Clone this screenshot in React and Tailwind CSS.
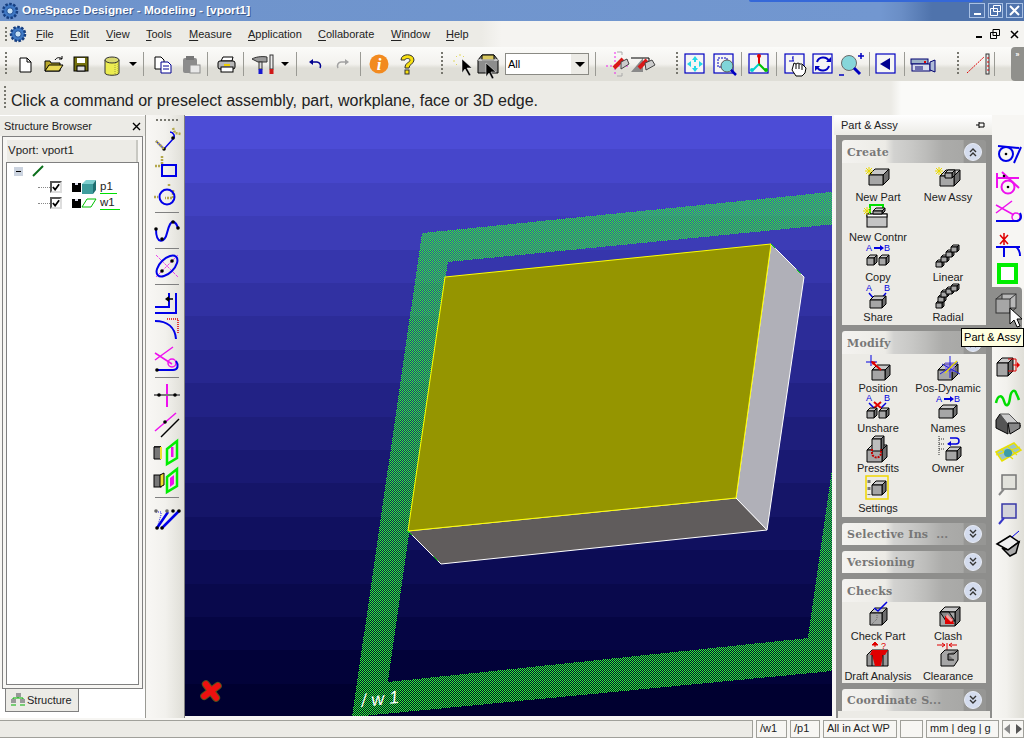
import React from "react";

const K = "#000";
const Cube = ({ x, y, w = 13, h = 11, d = 5, f = "#a6a6a6", t = "#c8c8c8", s = "#6f6f6f" }) => (
  <g stroke={K} strokeWidth="1" strokeLinejoin="round">
    <polygon points={`${x},${y + d} ${x + d},${y} ${x + w + d},${y} ${x + w},${y + d}`} fill={t} />
    <polygon points={`${x + w},${y + d} ${x + w + d},${y} ${x + w + d},${y + h} ${x + w},${y + h + d}`} fill={s} />
    <rect x={x} y={y + d} width={w} height={h} fill={f} />
  </g>
);
const Star = ({ x, y }) => (
  <g stroke="#e8d800" strokeWidth="1">
    <path d={`M${x - 4} ${y}h8M${x} ${y - 4}v8M${x - 3} ${y - 3}l6 6M${x - 3} ${y + 3}l6-6`} />
  </g>
);
const Ic = ({ children, size = 28 }) => (
  <svg width={size} height={size} viewBox="0 0 28 28" className="block shrink-0 overflow-visible">
    {children}
  </svg>
);
const AB = ({ y = 6, arrow = true }) => (
  <g fill="#0000e0">
    <text x="2" y={y} fontSize="9" fontFamily="Liberation Sans">A</text>
    <text x="20" y={y} fontSize="9" fontFamily="Liberation Sans">B</text>
    {arrow && <path d={`M10 ${y - 4}h6v-2l4 3-4 3v-2h-6z`} />}
  </g>
);

/* Part panel icons */
const I = {
  newPart: <Ic><Cube x={5} y={6} w={14} h={10} d={6} /><Star x={5} y={8} /></Ic>,
  newAssy: <Ic><Cube x={6} y={7} w={14} h={10} d={6} /><Cube x={11} y={7} w={7} h={5} d={3} /><Star x={5} y={8} /></Ic>,
  newContnr: (
    <Ic>
      <path d="M6 12V2h13v7" fill="none" stroke="#00e000" strokeWidth="2" />
      <rect x="3" y="11" width="20" height="13" fill="#c4c4c4" stroke={K} />
      <rect x="3" y="11" width="20" height="3" fill="#fff" stroke={K} />
      <Cube x={9} y={5} w={9} h={3} d={3} />
      <Star x={3} y={8} />
    </Ic>
  ),
  copy: <Ic><AB y={8} /><Cube x={3} y={12} w={7} h={7} d={3} /><Cube x={15} y={12} w={7} h={7} d={3} /></Ic>,
  linear: <Ic><Cube x={2} y={17} w={6} h={5} d={2} /><Cube x={7} y={12} w={6} h={5} d={2} /><Cube x={12} y={7} w={6} h={5} d={2} /><Cube x={17} y={2} w={6} h={5} d={2} /></Ic>,
  radial: <Ic><Cube x={2} y={18} w={6} h={5} d={2} /><Cube x={4} y={12} w={6} h={5} d={2} /><Cube x={7} y={7} w={6} h={5} d={2} /><Cube x={12} y={4} w={6} h={5} d={2} /><Cube x={17} y={1} w={6} h={5} d={2} /></Ic>,
  share: (
    <Ic>
      <AB y={8} arrow={false} />
      <path d="M5 10l6 7M22 10l-6 7" stroke="#0000e0" strokeWidth="1.5" />
      <Cube x={6} y={13} w={12} h={8} d={4} />
    </Ic>
  ),
  position: (
    <Ic>
      <path d="M7 1v11M2 8h11" stroke="#0000e0" />
      <Cube x={8} y={11} w={13} h={10} d={5} />
      <path d="M8 8l9 8" stroke="#e00000" strokeWidth="2" />
      <path d="M7 7l5 1-3 3z" fill="#e00000" />
    </Ic>
  ),
  posDyn: (
    <Ic>
      <Cube x={4} y={10} w={14} h={10} d={6} />
      <rect x="11" y="8" width="10" height="10" fill="#8a74e8" opacity=".7" />
      <path d="M16 2v22M6 20L24 8M8 10l18 10" stroke="#2020e0" />
      <path d="M11 19l12-12" stroke="#e8d800" strokeWidth="1.5" />
    </Ic>
  ),
  unshare: (
    <Ic>
      <AB y={7} arrow={false} />
      <path d="M5 9l5 5M22 9l-5 5" stroke="#0000e0" strokeWidth="1.5" />
      <path d="M10 8l7 6M17 8l-7 6" stroke="#e00000" strokeWidth="2" />
      <Cube x={3} y={14} w={7} h={7} d={3} /><Cube x={15} y={14} w={7} h={7} d={3} />
    </Ic>
  ),
  names: <Ic><AB y={8} /><Cube x={5} y={11} w={14} h={9} d={4} /></Ic>,
  pressfits: (
    <Ic>
      <Cube x={3} y={11} w={15} h={12} d={5} />
      <Cube x={8} y={2} w={9} h={12} d={3} f="#bdbdbd" />
      <path d="M8 15v4a4 4 0 0 0 9 0v-4" stroke="#c00000" strokeWidth="2" strokeDasharray="2 1" fill="none" />
    </Ic>
  ),
  owner: (
    <Ic>
      <path d="M5 2v20M5 5h5M5 10h5M5 15h5" stroke="#333" strokeDasharray="1 1" />
      <path d="M16 4h6a3 3 0 0 1 0 6h-8" stroke="#0000e0" strokeWidth="1.5" fill="none" />
      <path d="M17 7l-4 3 4 2z" fill="#0000e0" />
      <Cube x={12} y={13} w={11} h={9} d={4} />
    </Ic>
  ),
  settings: (
    <Ic>
      <rect x="2" y="2" width="22" height="23" fill="none" stroke="#f0d800" strokeWidth="1.5" />
      <path d="M5 6v15" stroke="#777" strokeDasharray="3 4" strokeWidth="3" />
      <Cube x={8} y={7} w={10} h={10} d={4} />
    </Ic>
  ),
  check: (
    <Ic>
      <Cube x={6} y={6} w={12} h={12} d={5} />
      <path d="M8 22l5-5v-6" stroke="#666" strokeDasharray="1 1" fill="none" />
      <path d="M10 6l4 3 9-9" stroke="#0000e0" strokeWidth="1.5" fill="none" />
    </Ic>
  ),
  clash: (
    <Ic>
      <Cube x={6} y={5} w={15} h={14} d={5} />
      <path d="M6 10l9 0 6 9H12z" fill="#888" stroke={K} />
      <path d="M11 14l7 2 2 6H11z" fill="#e00000" />
      <path d="M13 12l6 6-2 2-5-5z" fill="#f0a0a0" />
    </Ic>
  ),
  draft: (
    <Ic>
      <path d="M11 5v-3M11 0l-3 3h6z" fill="#e00000" stroke="#e00000" />
      <text x="17" y="7" fill="#e00000" fontSize="9" fontFamily="Liberation Sans">?</text>
      <polygon points="3,24 3,13 8,8 24,8 24,24" fill="#999" stroke={K} />
      <polygon points="8,8 24,8 21,13 6,13" fill="#e00000" />
      <polygon points="8,13 19,13 17,24 11,24" fill="#e00000" />
      <path d="M8 13v11M19 13v11" stroke={K} />
    </Ic>
  ),
  clearance: (
    <Ic>
      <path d="M3 3h8M15 3h8M8 1l3 2-3 2M18 1l-3 2 3 2M13 1v14" stroke="#e00000" fill="none" />
      <polygon points="7,24 7,12 11,8 24,8 24,18 20,24" fill="#a6a6a6" stroke={K} />
      <path d="M14 12h6l4-4M14 12v6h6" stroke={K} fill="#777" />
    </Ic>
  ),
};

/* Toolbar */
const BlueBox = ({ children }) => (
  <Ic><rect x="4" y="4" width="19" height="19" fill="#f5f5f5" stroke="#0000c0" strokeWidth="1.2" />{children}</Ic>
);
const T = {
  newDoc: <Ic><path d="M9 8h7l4 4v10H9z" fill="#fff" stroke={K} /><path d="M16 8v4h4" fill="none" stroke={K} /></Ic>,
  open: (
    <Ic>
      <path d="M6 21V11h5l1 2h9v8z" fill="#b9a82c" stroke={K} />
      <path d="M6 21l4-6h14l-4 6z" fill="#e9d955" stroke={K} />
      <path d="M16 10c2-3 5-3 7-1M23 6v3h-3" fill="none" stroke={K} />
    </Ic>
  ),
  save: <Ic><rect x="7" y="7" width="14" height="14" fill="#75710c" stroke={K} /><rect x="10" y="8" width="8" height="5" fill="#fff" /><rect x="10" y="16" width="8" height="5" fill="#ddd" stroke={K} /></Ic>,
  cyl: (
    <Ic>
      <path d="M7 10v13c0 3 14 3 14 0V10" fill="#ecec50" stroke="#333" />
      <ellipse cx="14" cy="10" rx="7" ry="3" fill="#d9d970" stroke="#333" />
      <path d="M17 13v12M20 12v11" stroke="#a0a040" strokeDasharray="1 1" />
    </Ic>
  ),
  copy: <Ic><path d="M7 7h6l3 3v9H7z" fill="#fff" stroke={K} /><path d="M13 12h7l3 3v8H13z" fill="#fff" stroke="#000090" /><path d="M15 16h6M15 19h6" stroke="#000090" /></Ic>,
  paste: <Ic><rect x="7" y="8" width="14" height="15" rx="2" fill="#8c8c8c" /><rect x="10" y="6" width="8" height="4" fill="#777" /><rect x="14" y="15" width="10" height="8" fill="#e8e8e8" stroke="#8c8c8c" /></Ic>,
  print: (
    <Ic>
      <path d="M9 11l2-4h10l-1 4z" fill="#fff" stroke={K} />
      <rect x="6" y="11" width="17" height="8" rx="2" fill="#b8b8b8" stroke={K} />
      <rect x="9" y="17" width="12" height="5" fill="#fff" stroke={K} />
      <path d="M12 15h6" stroke="#f0d000" strokeWidth="2" />
    </Ic>
  ),
  tools: (
    <Ic>
      <path d="M2 9c3-2 10-3 15-2v5H8c-2-1-4-2-6-3z" fill="#9a9a9a" stroke="#333" />
      <rect x="9" y="12" width="3" height="7" fill="#ddd" stroke="#333" />
      <rect x="20" y="5" width="3" height="14" fill="#eee" stroke="#333" />
      <rect x="8.5" y="19" width="4" height="5" fill="#1818d0" />
      <rect x="19.5" y="19" width="4" height="5" fill="#d01818" />
    </Ic>
  ),
  undo: <Ic><path d="M11 12h5a4 4 0 0 1 3 6" fill="none" stroke="#000090" strokeWidth="1.5" /><path d="M8 12l4-3v6z" fill="#000090" /></Ic>,
  redo: <Ic><path d="M17 12h-5a4 4 0 0 0-3 6" fill="none" stroke="#a2a2a2" strokeWidth="1.5" /><path d="M20 12l-4-3v6z" fill="#a2a2a2" /></Ic>,
  info: (
    <Ic>
      <circle cx="14" cy="14" r="9.5" fill="#f28a1f" />
      <text x="14" y="20" textAnchor="middle" fill="#fff" fontSize="17" fontWeight="700" fontStyle="italic" fontFamily="Liberation Serif">i</text>
    </Ic>
  ),
  help: (
    <Ic>
      <path d="M8 10c0-7 13-7 13 0 0 4-5 4-5 8h-4c0-6 5-5 5-8 0-2-5-2-5 0z" fill="#f8e010" stroke="#333" />
      <rect x="12" y="20" width="4" height="4" fill="#f8e010" stroke="#333" />
    </Ic>
  ),
  cursor: (
    <Ic>
      <path d="M7 6l1 1M4 11h2M8 14l-1 1M11 6v-2M14 7l1-1" stroke="#e0d860" />
      <path d="M13 9v14l3-4 4 7 2-1-4-7h5z" fill={K} stroke="#fff" strokeWidth=".5" />
    </Ic>
  ),
  box: (
    <Ic>
      <path d="M4 10l4-5h12l4 5v13H4z" fill="#8d8d8d" stroke={K} />
      <path d="M8 5h12v5H8z" fill="#d8c860" stroke={K} />
      <path d="M4 10h20" stroke="#fff" />
      <path d="M12 13v14l3-4 3 6 2-1-3-6h5z" fill={K} stroke="#fff" strokeWidth=".5" />
    </Ic>
  ),
  snap1: (
    <Ic>
      <path d="M12 2v24M3 16h22" stroke="#ee20ee" strokeDasharray="2 2" />
      <path d="M14 2h5v3M14 26h5v-3" stroke="#aaa" fill="none" />
      <path d="M11 18l9-9" stroke="#d81818" strokeWidth="4" />
      <path d="M18 12l6-3 2 5-8 5z" fill="#ccc" stroke="#444" />
    </Ic>
  ),
  snap2: (
    <Ic>
      <polygon points="2,22 14,8 14,22" fill="#8a8a8a" />
      <path d="M2 8h18v4" fill="none" stroke={K} />
      <path d="M10 18l8-8" stroke="#d81818" strokeWidth="4" />
      <path d="M16 13l7-3 3 5-9 5z" fill="#ccc" stroke="#444" />
    </Ic>
  ),
  fit: (
    <BlueBox>
      <g fill="#22d8e8">
        <path d="M14 6l-3 4h6zM14 22l-3-4h6zM6 14l4-3v6zM22 14l-4-3v6z" />
        <rect x="13" y="9" width="2" height="3" /><rect x="13" y="16" width="2" height="3" />
      </g>
    </BlueBox>
  ),
  zoomBox: (
    <BlueBox>
      <rect x="8" y="8" width="9" height="9" fill="none" stroke="#0000c0" strokeDasharray="2 1" />
      <circle cx="17" cy="16" r="6" fill="#7fd4d8" stroke="#555" />
      <path d="M21 20l5 5" stroke="#0000c0" strokeWidth="2.5" />
    </BlueBox>
  ),
  axes: (
    <BlueBox>
      <path d="M14 14V7" stroke="#e00000" strokeWidth="2" />
      <path d="M14 14l-6 6" stroke="#00d0d0" strokeWidth="2" />
      <path d="M14 14l6 6" stroke="#00c000" strokeWidth="2" />
      <circle cx="14" cy="6" r="2" fill="#e00000" /><circle cx="7" cy="20" r="2" fill="#00d0d0" /><circle cx="21" cy="20" r="2" fill="#00c000" />
    </BlueBox>
  ),
  hand: (
    <BlueBox>
      <path d="M11 8h1M8 11h5M12 6v5" stroke="#0000c0" />
      <path d="M13 13l2 1 2-1 2 1 2 0 4 4-1 5-3 3h-6l-4-6z" fill="#fff" stroke={K} />
      <path d="M15 14v5M18 14v5M21 15v5" stroke={K} />
    </BlueBox>
  ),
  rotate: (
    <BlueBox>
      <path d="M8 12a6.5 6.5 0 0 1 12-1M20 16a6.5 6.5 0 0 1-12 1" fill="none" stroke="#0000c0" strokeWidth="2" />
      <path d="M22 7v5h-5zM6 21v-5h5z" fill="#0000c0" />
    </BlueBox>
  ),
  zoomPlus: (
    <Ic>
      <circle cx="12" cy="13" r="7.5" fill="#86d6da" stroke="#6a6a6a" />
      <path d="M17 18l6 6" stroke="#0000c0" strokeWidth="3" />
      <path d="M21 6h6M24 3v6" stroke="#0000c0" strokeWidth="1.5" />
      <path d="M2 25h5" stroke="#0000c0" strokeWidth="1.5" />
    </Ic>
  ),
  back: <BlueBox><path d="M8 14l10-6v12z" fill="#000090" /></BlueBox>,
  cam: (
    <Ic>
      <rect x="2" y="9" width="17" height="5" fill="#9fb4c8" stroke="#000070" />
      <rect x="3" y="14" width="18" height="7" fill="#d8dcec" stroke="#000070" />
      <path d="M6 17h8M6 19h8" stroke="#000070" />
      <rect x="15" y="11" width="2" height="2" fill="#e00000" />
      <path d="M21 12l5-2v12l-5-2z" fill="#b0bcd8" stroke="#000070" />
    </Ic>
  ),
  measure: (
    <Ic>
      <path d="M3 23L20 7" stroke="#e00000" strokeDasharray="2 1" />
      <rect x="22" y="4" width="3" height="20" fill="#eee" stroke="#333" />
      <path d="M23 8h2M23 12h2M23 16h2M23 20h2" stroke="#e00000" />
    </Ic>
  ),
};

const Sep = ({ c }) => <div className={`w-px h-[24px] bg-[#9a9a94] shrink-0 ${c}`} />;
const Grip = ({ c = "" }) => (
  <div className={`w-[2px] h-[24px] shrink-0 bg-[repeating-linear-gradient(180deg,#77776f_0,#77776f_2px,transparent_2px,transparent_4px)] ${c}`} />
);
const DownArrow = ({ c }) => <div className={`shrink-0 w-[10px] flex justify-center ${c}`}><div className="w-0 h-0 border-x-[4px] border-x-transparent border-t-[4px] border-t-black" /></div>;

const Gear = ({ c }) => (
  <svg width="18" height="18" viewBox="0 0 18 18" className={`shrink-0 ${c}`}>
    <circle cx="9" cy="9" r="7" fill="#3f78c4" stroke="#173f80" strokeWidth="2.5" strokeDasharray="2.5 1.5" />
    <circle cx="9" cy="9" r="3.2" fill="#c6e0f4" stroke="#1c4d96" />
  </svg>
);

function TitleBar() {
  return (
    <div className="relative h-[21px] shrink-0 flex items-center bg-[linear-gradient(90deg,#6e93cb_0,#7297d0_86%,#6a8ec6_88%,#4f73ac_91%,#4f73ac_100%)]">
      <div className="absolute left-[749px] top-0 w-[234px] h-[2px] bg-[#3568d8] rounded-b" />
      <Gear c="ml-px" />
      <span className="ml-[3px] text-[11.8px] font-bold text-white [text-shadow:1px_1px_0_#3c5a8c]">OneSpace Designer - Modeling - [vport1]</span>
      <div className="ml-auto flex gap-[3px] pr-px">
        <div className="w-[16px] h-[15px] border border-[#a8c0e4] flex items-end justify-center pb-[2px]"><div className="w-[7px] h-[2px] bg-white" /></div>
        <div className="w-[15px] h-[15px] border border-[#a8c0e4] flex items-center justify-center">
          <svg width="11" height="11" viewBox="0 0 11 11"><path d="M3.5 .5h7v6h-7zM.5 3.5h7v7h-7z" fill="none" stroke="#fff" /></svg>
        </div>
        <div className="w-[17px] h-[15px] border border-[#a8c0e4] flex items-center justify-center">
          <svg width="11" height="11" viewBox="0 0 11 11"><path d="M1 1l9 9M10 1l-9 9" stroke="#fff" strokeWidth="2" /></svg>
        </div>
      </div>
    </div>
  );
}

const MenuItem = ({ u, r, c }) => (
  <span className={`shrink-0 text-[11px] text-[#222] ${c}`}><span className="underline underline-offset-2">{u}</span>{r}</span>
);

function MenuBar() {
  return (
    <div className="h-[26px] shrink-0 flex items-center pl-[5px] bg-[linear-gradient(90deg,#ecebe6_0,#ecebe6_47%,#f5f4f1_49%)]">
      <Grip c="!h-[14px]" />
      <Gear c="ml-[2px]" />
      <MenuItem u="F" r="ile" c="ml-[9px] w-[34px]" />
      <MenuItem u="E" r="dit" c="w-[36px]" />
      <MenuItem u="V" r="iew" c="w-[40px]" />
      <MenuItem u="T" r="ools" c="w-[43px]" />
      <MenuItem u="M" r="easure" c="w-[59px]" />
      <MenuItem u="A" r="pplication" c="w-[70px]" />
      <MenuItem u="C" r="ollaborate" c="w-[73px]" />
      <MenuItem u="W" r="indow" c="w-[55px]" />
      <MenuItem u="H" r="elp" c="" />
      <div className="ml-auto flex items-center gap-[8px] pr-[5px]">
        <div className="w-[6px] h-[2px] bg-black mt-[6px]" />
        <svg width="10" height="10" viewBox="0 0 10 10"><path d="M3 .5h6.5v6H3zM.5 3.5h6v6h-6z" fill="#f5f4f1" stroke={K} /></svg>
        <svg width="9" height="9" viewBox="0 0 9 9" className="ml-[2px]"><path d="M1 1l7 7M8 1l-7 7" stroke={K} strokeWidth="1.5" /></svg>
      </div>
    </div>
  );
}

function ToolBar() {
  return (
    <div className="h-[34px] shrink-0 flex items-center pl-[5px] bg-[linear-gradient(180deg,#fbfbf9_0,#f3f2ee_50%,#dfded7_62%,#dfded7_100%)]">
      <Grip />
      <div className="ml-[4px]">{T.newDoc}</div>
      {T.open}
      {T.save}
      <div className="w-[33px] flex justify-center">{T.cyl}</div>
      <DownArrow />
      <Sep c="ml-[5px]" />
      <div className="ml-[4px]">{T.copy}</div>
      {T.paste}
      <Sep c="ml-[3px]" />
      <div className="ml-[4px]">{T.print}</div>
      <Sep c="ml-[3px]" />
      <div className="ml-[6px]">{T.tools}</div>
      <DownArrow c="ml-[2px]" />
      <Sep c="ml-[6px]" />
      <div className="ml-[4px]">{T.undo}</div>
      {T.redo}
      <Sep c="ml-[3px]" />
      <div className="ml-[4px]">{T.info}</div>
      {T.help}
      <Grip c="ml-[20px]" />
      <div className="ml-[6px]">{T.cursor}</div>
      <div className="w-[22px] flex justify-center">{T.box}</div>
      <div className="ml-[6px] w-[84px] h-[22px] shrink-0 border border-[#8a8a84] bg-white flex items-center text-[11px] text-black pl-[2px]">
        All
        <div className="ml-auto w-[17px] h-full bg-[#ecebe6] flex items-center justify-center">
          <div className="w-0 h-0 border-x-[5px] border-x-transparent border-t-[5px] border-t-black" />
        </div>
      </div>
      <Sep c="ml-[6px]" />
      <div className="ml-[8px] w-[26px] flex justify-center">{T.snap1}</div>
      <div className="w-[25px] flex justify-center">{T.snap2}</div>
      <Grip c="ml-[21px]" />
      <div className="ml-[3px]">{T.fit}</div>
      <div className="ml-px">{T.zoomBox}</div>
      <Sep c="ml-[3px]" />
      <div className="ml-[3px]">{T.axes}</div>
      <Sep c="ml-[3px]" />
      <div className="ml-[4px]">{T.hand}</div>
      {T.rotate}
      {T.zoomPlus}
      <Sep c="ml-[4px]" />
      <div className="ml-[2px]">{T.back}</div>
      <Sep c="ml-[4px]" />
      <div className="ml-[4px]">{T.cam}</div>
      <Grip c="ml-[20px]" />
      <div className="ml-[5px]">{T.measure}</div>
      <Sep c="ml-[2px]" />
      <div className="ml-auto w-[13px] h-[34px] bg-[#90908c] rounded-l-sm text-[7px] text-white leading-none text-center pt-[4px] font-bold">»</div>
    </div>
  );
}

function Prompt() {
  return (
    <div className="h-[34px] shrink-0 flex items-center pl-[4px] bg-[linear-gradient(90deg,#ecebe6_0,#ecebe6_87%,#fafaf8_88%)]">
      <Grip />
      <span className="ml-[5px] pt-[5px] text-[16px] text-[#222] whitespace-nowrap">Click a command or preselect assembly, part, workplane, face or 3D edge.</span>
    </div>
  );
}

const Floppy = () => (
  <svg width="9" height="9" viewBox="0 0 9 9" className="shrink-0"><rect width="9" height="9" fill="#000" /><rect x="3" y="0" width="3" height="2" fill="#dde" /></svg>
);
const Check = () => (
  <div className="w-[12px] h-[12px] border-2 border-t-[#555] border-l-[#555] border-r-[#ddd] border-b-[#ddd] bg-white shrink-0 flex items-center justify-center">
    <svg width="9" height="8" viewBox="0 0 9 8"><path d="M1 4l2.5 3L8 1" stroke={K} strokeWidth="2" fill="none" /></svg>
  </div>
);

function StructureBrowser() {
  return (
    <aside className="w-[150px] shrink-0 flex">
      <div className="w-[146px] flex flex-col bg-[#f7f6f3] border-r border-[#9a9a94]">
        <div className="h-[21px] shrink-0 flex items-center pl-[4px] pr-[3px] pt-px text-[11px] text-[#222] bg-[#ecebe6] border-t border-[#fff]">
          Structure Browser
          <svg width="9" height="9" viewBox="0 0 9 9" className="ml-auto mr-[1px]"><path d="M1 1l7 7M8 1l-7 7" stroke={K} strokeWidth="1.4" /></svg>
        </div>
        <div className="ml-[2px] w-[141px] h-[553px] border border-[#808080] p-[3px] flex flex-col">
          <div className="h-[22px] shrink-0 bg-[#ecebe6] border-r-2 border-[#c8c8c2] mx-px flex items-center pl-px text-[11.5px] text-[#222]">Vport: vport1</div>
          <div className="flex-1 bg-white border border-[#808080] flex flex-col text-[11.5px] text-[#222]">
            <div className="h-[16px] flex items-center pl-[7px]">
              <div className="w-[9px] h-[9px] bg-[#ccd4e0] flex items-center justify-center"><div className="w-[5px] h-px bg-black" /></div>
              <svg width="14" height="14" viewBox="0 0 14 14" className="ml-[8px]"><path d="M2 12L12 2" stroke="#0a6e1a" strokeWidth="2" /></svg>
            </div>
            <div className="h-[16px] flex items-center pl-[31px]">
              <div className="w-[12px] h-px border-t border-dotted border-[#888]" />
              <Check />
              <div className="ml-[10px]"><Floppy /></div>
              <svg width="16" height="15" viewBox="0 0 16 15" className="shrink-0">
                <polygon points="1,4 5,0 15,0 12,4" fill="#7fd0d0" />
                <rect x="1" y="4" width="11" height="10" fill="#3e9d9d" />
                <polygon points="12,4 15,0 15,10 12,14" fill="#1e6e70" />
              </svg>
              <span className="ml-[3px] w-[17px] border-b border-[#00e000] leading-[13px]">p1</span>
            </div>
            <div className="h-[16px] flex items-center pl-[31px] relative">
              <div className="w-[12px] h-px border-t border-dotted border-[#888]" />
              <Check />
              <div className="ml-[10px]"><Floppy /></div>
              <svg width="16" height="10" viewBox="0 0 16 10" className="shrink-0"><polygon points="1,9 6,1 15,1 10,9" fill="#fff" stroke="#00c000" /></svg>
              <span className="ml-[3px] w-[20px] border-b border-[#00e000] leading-[13px]">w1</span>
            </div>
          </div>
        </div>
        <div className="flex-1 bg-white">
          <div className="ml-[5px] w-[74px] h-[23px] bg-[#ecebe6] border-x border-b border-[#808080] flex items-center text-[11px] text-[#222]">
            <svg width="16" height="14" viewBox="0 0 16 14" className="ml-[4px] shrink-0 mr-px">
              <rect x="6" y="0" width="5" height="4" fill="#999" /><rect x="1" y="6" width="5" height="4" fill="#999" /><rect x="10" y="6" width="5" height="4" fill="#999" />
              <path d="M3 6V5h10v1M8 4v1M1 12h5M10 12h5" stroke="#00b000" fill="none" />
            </svg>
            Structure
          </div>
        </div>
      </div>
    </aside>
  );
}

const Rule = ({ c }) => <div className={`w-[24px] h-px bg-[#808080] ${c}`} />;
const B = "#0000e8";
const M = "#ee10ee";
const Dot = ({ x, y, c = K, r = 1.8 }) => <circle cx={x} cy={y} r={r} fill={c} />;
const Yel = ({ d }) => <path d={d} stroke="#b4a84c" strokeWidth="2.5" strokeDasharray="2 1" fill="none" />;

const LeftTools = () => (
  <div className="w-[35px] shrink-0 flex flex-col items-center border-r border-[#808080] bg-[linear-gradient(90deg,#f7f6f3_0,#f2f1ed_45%,#dfded7_100%)]">
    <div className="mt-[4px] w-[22px] h-[2px] bg-[repeating-linear-gradient(90deg,#77776f_0,#77776f_2px,transparent_2px,transparent_4px)]" />
    <div className="mt-[5px]"><Ic><Yel d="M20 2l2 5 6 1" /><path d="M3 15l8 8 9-10c3-3 0-7-3-7" fill="none" stroke={B} strokeWidth="1.5" /><Dot x={11} y={23} /><Dot x={20} y={12} /><Yel d="M3 15l8 8" /></Ic></div>
    <div><Ic><Yel d="M9 2v10H1" /><rect x="9" y="11" width="14" height="11" fill="none" stroke={B} strokeWidth="2" /></Ic></div>
    <div><Ic><Yel d="M16 2v2M1 15h4M20 8v8h-8" /><circle cx="14" cy="15" r="7.5" fill="none" stroke={B} strokeWidth="2" /></Ic></div>
    <Rule c="mt-[2px]" />
    <div className="mt-[4px]"><Ic><path d="M3 12c0 16 9 14 11 4 2-8 4-12 7-11 2 1 3 3 4 6" fill="none" stroke={B} strokeWidth="2" /><Dot x={3} y={12} /><Dot x={9} y={22} /><Dot x={20} y={5} /><Dot x={25} y={11} /></Ic></div>
    <Rule c="mt-[3px]" />
    <div className="mt-[3px]"><Ic><path d="M3 25L25 3M3 3l22 22" stroke={M} strokeDasharray="3 1" strokeWidth=".8" /><ellipse cx="14" cy="14" rx="13" ry="7" transform="rotate(-45 14 14)" fill="none" stroke={B} strokeWidth="2" /><Dot x={9} y={19} /><Dot x={19} y={9} /></Ic></div>
    <Rule c="mt-[4px]" />
    <div className="mt-[3px]"><Ic><path d="M2 19h14V5M2 25h21V5" fill="none" stroke={B} strokeWidth="2" /><path d="M20 11h-6" stroke={K} strokeWidth="1.5" /><path d="M12 11l4-3v6z" fill={K} /></Ic></div>
    <div><Ic><path d="M2 5c12 0 20 6 21 18" fill="none" stroke={B} strokeWidth="2" /><path d="M14 3h11v14" fill="none" stroke="#e00000" strokeDasharray="1 1" strokeWidth="1.5" /></Ic></div>
    <div className="mt-[2px]"><Ic><path d="M2 14L20 1M2 7l17 11" stroke={M} strokeWidth="1.5" /><circle cx="19" cy="17" r="4" fill="none" stroke={M} strokeWidth="1.5" /><path d="M4 24h16c5 0 6-5 3-9" fill="none" stroke={B} strokeWidth="2" /><Dot x={4} y={24} /></Ic></div>
    <Rule c="mt-[3px]" />
    <div className="mt-[3px]"><Ic><path d="M14 3v23" stroke={M} strokeWidth="2" /><path d="M1 14h26" stroke="#777" strokeWidth="2" /><Dot x={6} y={14} /><Dot x={22} y={14} /></Ic></div>
    <div className="mt-px"><Ic><path d="M2 21L23 3" stroke={M} strokeWidth="1.5" /><path d="M8 27L26 9" stroke={K} strokeWidth="1.5" /><Dot x={12} y={12} /></Ic></div>
    <div><Ic><Cube x={1} y={9} w={7} h={12} d={0} f="#777" /><rect x="7" y="9" width="2" height="12" fill="#f0e030" /><polygon points="14,11 24,3 24,20 14,26" fill="none" stroke="#00ee00" strokeWidth="2.5" /><rect x="18" y="9" width="2.5" height="10" fill={M} /></Ic></div>
    <div><Ic><rect x="1" y="9" width="7" height="12" fill="#777" stroke={K} /><polygon points="7,9 11,7 11,19 7,21" fill="#f0e030" stroke={K} /><polygon points="14,11 24,3 24,20 14,26" fill="none" stroke="#00ee00" strokeWidth="2.5" /><polygon points="17,12 21,9 21,18 17,21" fill={M} /></Ic></div>
    <Rule c="mt-[3px]" />
    <div className="mt-[6px]"><Ic><path d="M3 8h5v3l-4 13M3 8" stroke="#2020e0" strokeDasharray="1 1" fill="none" /><path d="M4 24L15 8M9 24L26 7" stroke={B} strokeWidth="2.5" /><Dot x={3} y={7} c="#666" /><Dot x={14} y={7} c="#666" /><Dot x={20} y={7} /><Dot x={26} y={7} /><Dot x={4} y={24} /><Dot x={9} y={24} /></Ic></div>
  </div>
);

const bands = Array.from({ length: 18 }, (_, i) => {
  const t = i / 17;
  return { y: 116 + i * 33.4, c: `rgb(${Math.round(76 * (1 - t) ** 1.25)},${Math.round(76 * (1 - t) ** 1.25)},${Math.round(214 - 166 * t ** 0.95)})` };
});

const Viewport = () => (
  <div className="w-[647px] shrink-0 h-[600px] mt-px relative overflow-hidden">
    <svg width="647" height="600" viewBox="185 116 647 600" className="block">
      <defs>
        <pattern id="chk" width="2" height="2" patternUnits="userSpaceOnUse">
          <rect width="1" height="1" fill="#2cff2c" />
          <rect x="1" y="1" width="1" height="1" fill="#2cff2c" />
        </pattern>
      </defs>
      {bands.map((b) => <rect key={b.y} x="185" y={b.y} width="647" height="34" fill={b.c} shapeRendering="crispEdges" />)}
      <path fillRule="evenodd" fill="url(#chk)" shapeRendering="crispEdges" d="M422 233L1000 175V655L352 717ZM448 262L388 682L808 638L867 221Z" />
      <polygon points="771,244 804,277 767,530 736,498" fill="#b0b0b8" stroke="#fff" />
      <polygon points="408,531 736,498 767,530 441,564" fill="#605c5c" stroke="#fff" />
      <polygon points="445,277 771,244 736,498 408,531" fill="#959500" stroke="#ffff00" />
      <path d="M771 244L804 277M408 531L441 564" stroke="#00e000" strokeDasharray="6 30" />
      <text x="0" y="0" fill="#fff" fontSize="18" fontFamily="Liberation Sans" transform="translate(361 707) rotate(-6) skewX(-10)">/ w 1</text>
      <g transform="translate(211 691) rotate(8)">
        <path d="M-6 -6L6 6M6 -6L-6 6" stroke="#55501c" strokeWidth="8" strokeLinecap="round" />
        <path d="M-6 -6L6 6M6 -6L-6 6" stroke="#ee1010" strokeWidth="6" strokeLinecap="round" />
      </g>
    </svg>
  </div>
);

const Chevron = ({ up }) => (
  <div className="w-[18px] h-[18px] rounded-full bg-[#d4dcee] border border-[#e8ecf6] shrink-0 flex items-center justify-center mr-[4px]">
    <svg width="10" height="10" viewBox="0 0 10 10"><path d={up ? "M2 5l3-3 3 3M2 9l3-3 3 3" : "M2 1l3 3 3-3M2 5l3 3 3-3"} stroke="#333" strokeWidth="1.4" fill="none" /></svg>
  </div>
);
const SecHead = ({ title, up }) => (
  <div className={`${up ? "h-[23px]" : "h-[22px]"} shrink-0 flex items-center pl-[5px] rounded-t-[3px] bg-[linear-gradient(90deg,#f4f3f0_0,#ecebe6_30%,#d2d2d0_36%,#c8c8c6_48%,#bdbdbb_58%,#acacaa_70%,#a8a8a6_84%,#969694_85%,#969694_100%)]`}>
    <span className="pt-[3px] font-['DejaVu_Serif',serif] font-bold text-[11px] text-[#777] whitespace-pre tracking-[0.2px]">{title}</span>
    <div className="ml-auto"><Chevron up={up} /></div>
  </div>
);
const Item = ({ icon, label }) => (
  <div className="h-[40px] flex flex-col items-center">
    <div className="h-[28px] flex items-end">{icon}</div>
    <span className="text-[11px] leading-[12px] text-[#222] whitespace-nowrap">{label}</span>
  </div>
);
const Sec = ({ title, children, pb }) => (
  <div className="shrink-0">
    <SecHead title={title} up />
    <div className={`grid grid-cols-[70px_70px] pl-px bg-[#ecebe6] ${pb}`}>{children}</div>
  </div>
);

const RightPanel = () => (
  <aside className="w-[158px] shrink-0 ml-[2px] flex flex-col h-[603px]">
    <div className="h-[20px] shrink-0 flex items-center pl-[7px] text-[11px] text-[#222] bg-[linear-gradient(180deg,#fff_0,#ecebe6_100%)]">
      Part &amp; Assy
      <svg width="9" height="9" viewBox="0 0 9 9" className="ml-auto mr-[7px]"><path d="M0 4h3M3 1v6M3 2h5v4H3" stroke={K} fill="none" /></svg>
    </div>
    <div className="ml-[2px] flex-1 mb-[2px] bg-[#8e8e8c] flex flex-col">
      <div className="flex-1 overflow-hidden px-[6px] pt-[5px] flex flex-col gap-[6px]">
        <Sec title="Create" pb="pb-[2px]">
          <Item icon={I.newPart} label="New Part" />
          <Item icon={I.newAssy} label="New Assy" />
          <Item icon={I.newContnr} label="New Contnr" />
          <div />
          <Item icon={I.copy} label="Copy" />
          <Item icon={I.linear} label="Linear" />
          <Item icon={I.share} label="Share" />
          <Item icon={I.radial} label="Radial" />
        </Sec>
        <Sec title="Modify" pb="pb-[3px]">
          <Item icon={I.position} label="Position" />
          <Item icon={I.posDyn} label="Pos-Dynamic" />
          <Item icon={I.unshare} label="Unshare" />
          <Item icon={I.names} label="Names" />
          <Item icon={I.pressfits} label="Pressfits" />
          <Item icon={I.owner} label="Owner" />
          <Item icon={I.settings} label="Settings" />
        </Sec>
        <SecHead title="Selective Ins  ..." />
        <SecHead title="Versioning" />
        <Sec title="Checks" pb="pb-px">
          <Item icon={I.check} label="Check Part" />
          <Item icon={I.clash} label="Clash" />
          <Item icon={I.draft} label="Draft Analysis" />
          <Item icon={I.clearance} label="Clearance" />
        </Sec>
        <SecHead title="Coordinate S..." />
      </div>
      <div className="h-[16px] mx-[2px] mb-px shrink-0 bg-[#ecebe6] flex items-center justify-center">
        <div className="w-0 h-0 border-x-[3px] border-x-transparent border-t-[3px] border-t-black" />
      </div>
    </div>
  </aside>
);

const Gr = "#00ee00";
const RightStrip = () => (
  <div className="w-[32px] shrink-0 flex flex-col relative">
    <div className="h-[172px] shrink-0 bg-[#f7f6f3] flex flex-col items-center pt-[25px]">
      <Ic><path d="M4 6l21 2M27 7l-7 16" stroke={B} strokeWidth="2" /><circle cx="12" cy="14" r="7" fill="none" stroke={B} strokeWidth="2" /><Dot x={12} y={14} r={1.3} /></Ic>
      <div className="mt-[2px]"><Ic><path d="M3 8h22M3 3v15M8 2l17 16" stroke={M} strokeWidth="2" /><circle cx="14" cy="17" r="6.5" fill="none" stroke={M} strokeWidth="2" /><Dot x={14} y={17} r={1.3} /><Dot x={10} y={6} r={1.3} /></Ic></div>
      <div className="mt-px"><Ic><path d="M2 14L18 2M2 6l18 10" stroke={M} strokeWidth="1.5" /><circle cx="22" cy="18" r="4" fill="none" stroke={M} strokeWidth="1.5" /><path d="M2 22h20c5 0 6-4 4-8" fill="none" stroke={B} strokeWidth="2" /></Ic></div>
      <div className="mt-[4px]"><Ic><path d="M2 16h24M10 16v10M22 16c3 2 4 5 4 9" stroke={B} strokeWidth="2" fill="none" /><path d="M6 4l8 9M14 4l-8 9M10 2v12" stroke="#e00000" strokeWidth="1.5" /></Ic></div>
      <div className="mt-px"><Ic><rect x="5" y="5" width="17" height="17" fill="#fff" stroke={Gr} strokeWidth="4" /></Ic></div>
    </div>
    <div className="h-[44px] shrink-0 w-[30px] bg-[#8e8e8c] flex justify-center pt-[3px] rounded-r-sm">
      <Ic>
        <rect x="9" y="4" width="14" height="14" fill="#b8b8b8" stroke="#333" />
        <path d="M3 9l6-5M17 23l6-5M17 9l6-5" stroke="#333" />
        <rect x="3" y="9" width="14" height="14" fill="#a6a6a6" stroke="#333" />
      </Ic>
    </div>
    <div className="flex-1 bg-[linear-gradient(90deg,#f7f6f3_0,#f2f1ed_45%,#dfded7_100%)] flex flex-col items-center pt-[20px]">
      <Ic><Cube x={3} y={7} w={11} h={13} d={5} /><path d="M14 8h8v12h-8" fill="none" stroke="#e00000" /><path d="M19 14h6" stroke="#e00000" /><path d="M26 14l-3-3v6z" fill="#e00000" /></Ic>
      <div className="mt-[2px]"><Ic><path d="M2 22c2-9 6-8 8 -2 2 7 5 5 6-3 1-8 5-9 6-5 1 2 2 4 3 7" fill="none" stroke="#00dd00" strokeWidth="2.5" /></Ic></div>
      <div className="mt-px"><Ic><polygon points="2,10 6,4 14,13 14,24 2,18" fill="#555" stroke={K} /><polygon points="6,4 15,4 27,16 16,17" fill="#ccc" stroke="#555" /><polygon points="14,13 26,13 26,18 16,24" fill="#888" stroke={K} /></Ic></div>
      <div className="mt-px"><Ic><polygon points="2,13 20,4 27,11 8,22" fill="#9cc4c8" stroke="#e8e000" strokeWidth="1.5" /><path d="M7 10l12 10M13 7l10 9M2 16l24-8" stroke="#e8e000" strokeWidth="1.2" /><circle cx="14" cy="14" r="4" fill="#3c9ca8" /></Ic></div>
      <div className="mt-[3px]"><Ic><rect x="8" y="5" width="14" height="14" fill="#e2e2dc" stroke="#777" strokeWidth="1.5" /><path d="M10 19l-5 6" stroke="#888" strokeWidth="2" /></Ic></div>
      <div className="mt-px"><Ic><rect x="8" y="5" width="14" height="14" fill="#d4d4da" stroke="#3838a8" strokeWidth="1.5" /><path d="M10 19l-5 6" stroke="#3838c8" strokeWidth="2" /></Ic></div>
      <div className="mt-[3px]"><Ic><polygon points="3,14 16,6 25,12 14,20" fill="#eee" stroke={K} strokeWidth="1.5" /><polygon points="8,18 14,20 25,12 22,23 16,26" fill="#aaa" stroke={K} strokeWidth="1.5" /><path d="M18 7l7-6" stroke={B} /></Ic></div>
    </div>
  </div>
);

const Cell = ({ c, children }) => (
  <div className={`h-[18px] shrink-0 border border-[#a0a09a] flex items-center pl-[3px] text-[11px] text-[#222] whitespace-nowrap ${c}`}>{children}</div>
);

const StatusBar = () => (
  <div className="h-[20px] shrink-0 flex items-center gap-[3px] bg-[#f7f6f3] pt-[1px]">
    <Cell c="w-[753px] bg-[#ecebe6] border-l-0" />
    <Cell c="w-[31px]">/w1</Cell>
    <Cell c="w-[30px]">/p1</Cell>
    <Cell c="w-[74px]">All in Act WP</Cell>
    <Cell c="w-[23px]" />
    <Cell c="w-[73px]">mm | deg | g</Cell>
    <div className="h-[18px] w-[25px] border border-[#a0a09a] flex items-center justify-center gap-[6px]">
      <div className="w-0 h-0 border-y-[5px] border-y-transparent border-r-[6px] border-r-[#8a8a8a]" />
      <div className="w-0 h-0 border-y-[5px] border-y-transparent border-l-[6px] border-l-[#555]" />
    </div>
  </div>
);

export default function App() {
  return (
    <div className="relative w-[1024px] h-[738px] overflow-hidden flex flex-col bg-[#f7f6f3] font-['Liberation_Sans',sans-serif]">
      <TitleBar />
      <MenuBar />
      <ToolBar />
      <Prompt />
      <main className="h-[603px] shrink-0 flex">
        <StructureBrowser />
        <LeftTools />
        <Viewport />
        <RightPanel />
        <RightStrip />
      </main>
      <StatusBar />
      <div className="absolute left-[961px] top-[328px] w-[63px] h-[19px] bg-[#ffffe1] border border-black text-[11px] text-black flex items-center justify-center whitespace-nowrap">Part &amp; Assy</div>
      <svg width="14" height="22" viewBox="0 0 14 22" className="absolute left-[1009px] top-[307px]">
        <path d="M1 1v16l4-4 3 7 3-1-3-7h5z" fill="#fff" stroke={K} />
      </svg>
    </div>
  );
}
